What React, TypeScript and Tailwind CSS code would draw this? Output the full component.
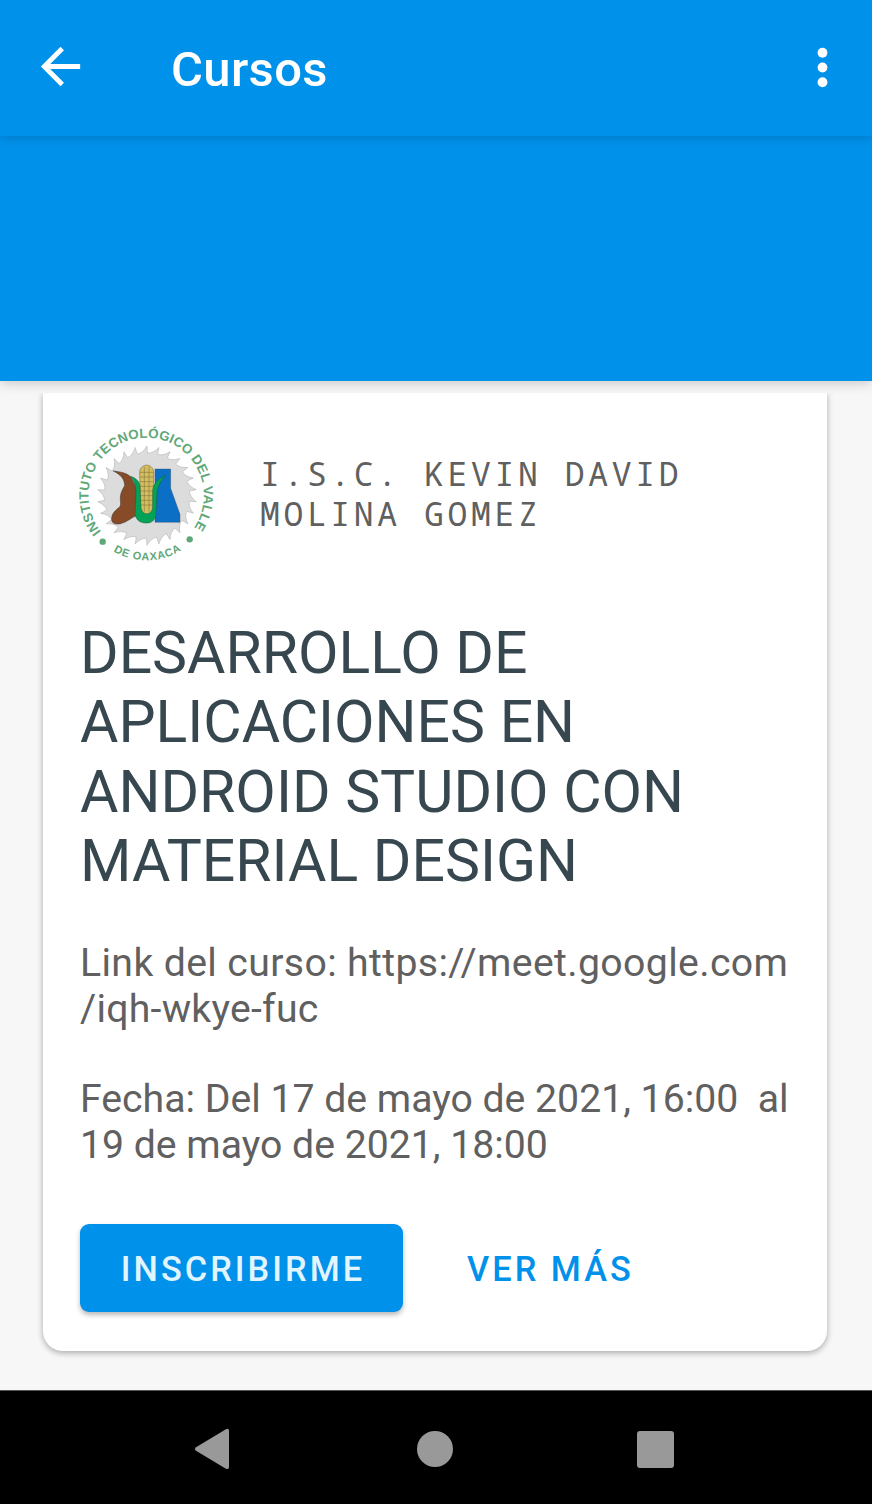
const GEAR_TEETH = 26;

function gearPath(cx: number, cy: number, outer: number, inner: number): string {
  const step = (Math.PI * 2) / GEAR_TEETH;
  const at = (r: number, a: number) => `${(cx + r * Math.sin(a)).toFixed(1)} ${(cy - r * Math.cos(a)).toFixed(1)}`;
  const parts: string[] = [`M${at(outer, 0)}`];
  for (let i = 0; i < GEAR_TEETH; i++) {
    const a = i * step;
    parts.push(`L${at(inner, a + step * 0.05)}Q${at(inner, a + step * 0.6)} ${at(outer, a + step)}`);
  }
  return parts.join("") + "Z";
}

function Emblem() {
  return (
    <svg viewBox="0 0 465 465" className="-mb-[10px] -ml-[10px] -mt-[10px] size-[155px] shrink-0 overflow-visible" role="img" aria-label="Instituto Tecnológico del Valle de Oaxaca">
      <defs>
        <path id="ring-top" d="M94 350A173 173 0 1 1 372 338" />
        <path id="ring-bottom" d="M130 409A198 198 0 0 0 342 401" />
      </defs>
      <path d={gearPath(231, 242, 149, 128)} fill="#dcdcdc" stroke="#aaa" strokeWidth="1.5" />
      <path d="M255 162H302V220L330 298V322H255Z" fill="#0b70c5" stroke="#345" strokeWidth="1" />
      <path
        d="M130 168C150 170 172 174 183 187L200 222L201 301C184 308 172 321 152 326C138 329 126 326 125 314C124 296 136 286 148 277C155 269 150 260 151 246C152 231 160 219 164 212C164 192 152 179 130 168Z"
        fill="#874b27"
        stroke="#333"
        strokeWidth="1.5"
      />
      <path d="M209 170C212 144 248 144 251 170V280C249 304 211 304 211 280Z" fill="#d3bd62" stroke="#665c24" strokeWidth="1.5" />
      <path
        d="M210 172H250M210 186H250M210 200H250M210 214H250M210 228H250M210 242H250M210 256H250M211 270H249M223 156V290M237 156V290"
        stroke="#76692e"
        strokeWidth="1.5"
        fill="none"
      />
      <path
        d="M182 184C196 189 209 199 210 214L213 276C214 303 247 303 248 276V226C250 206 265 190 288 181C274 196 263 212 261 232L258 294C256 318 244 325 226 324C206 323 196 311 195 294L198 240C199 216 194 199 182 184Z"
        fill="#02a357"
        stroke="#195d39"
        strokeWidth="1.5"
      />
      <g fill="#5fa878" fontFamily="'Liberation Sans', Arial, sans-serif" fontWeight="700">
        <text fontSize="40">
          <textPath href="#ring-top" textLength="764" lengthAdjust="spacing">
            INSTITUTO TECNOLÓGICO DEL VALLE
          </textPath>
        </text>
        <text fontSize="33">
          <textPath href="#ring-bottom" textLength="214" lengthAdjust="spacing">
            DE OAXACA
          </textPath>
        </text>
        <circle cx="98" cy="380" r="9.5" />
        <circle cx="359" cy="373" r="9.5" />
      </g>
    </svg>
  );
}

function TopBar() {
  return (
    <header className="relative z-10 flex h-[136px] shrink-0 items-center bg-[#0091ea] pl-[31px] pr-[20px] text-white shadow-[0_2px_10px_rgba(0,0,0,0.16)]">
      <button aria-label="Volver" className="-mt-[4px]">
        <svg viewBox="0 0 24 24" className="size-[59px]" fill="currentColor">
          <path d="M20 11H7.83l5.59-5.59L12 4l-8 8 8 8 1.41-1.41L7.83 13H20v-2z" />
        </svg>
      </button>
      <h1 className="ml-[81px] mt-[3px] text-[49px] font-medium leading-[58px] tracking-[0.35px]">Cursos</h1>
      <button aria-label="Más opciones" className="-mt-[2px] ml-auto">
        <svg viewBox="0 0 24 24" className="size-[59px]" fill="currentColor">
          <circle cx="12" cy="6" r="2" />
          <circle cx="12" cy="12" r="2" />
          <circle cx="12" cy="18" r="2" />
        </svg>
      </button>
    </header>
  );
}

function CourseCard() {
  return (
    <article className="h-[958px] rounded-b-[20px] bg-white pl-[37px] pt-[32px] shadow-[0_2px_6px_rgba(0,0,0,0.32)]">
      <div className="flex items-start">
        <Emblem />
        <p className="ml-[35px] mt-[29px] whitespace-pre font-['Noto_Sans_Mono','DejaVu_Sans_Mono',monospace] text-[33px] leading-[40px] tracking-[3.65px] text-[#606060]">
          {"I.S.C. KEVIN DAVID\nMOLINA GOMEZ"}
        </p>
      </div>
      <h2 className="mt-[58px] whitespace-pre text-[58.9px] leading-[69.4px] text-[#37474f]">
        {"DESARROLLO DE\nAPLICACIONES EN\nANDROID STUDIO CON\nMATERIAL DESIGN"}
      </h2>
      <p className="mt-[44px] whitespace-pre text-[39.2px] leading-[46px] tracking-[0.37px] text-[#606060]">
        {"Link del curso: https://meet.google.com\n"}
        <span className="tracking-[0.25px]">/iqh-wkye-fuc</span>
      </p>
      <p className="mt-[44px] whitespace-pre text-[39.2px] leading-[46px] text-[#606060]">
        {"Fecha: Del 17 de mayo de 2021, 16:00  al\n19 de mayo de 2021, 18:00"}
      </p>
      <div className="mt-[56px] flex items-center">
        <button className="flex h-[88px] w-[323px] items-center justify-center rounded-[9px] bg-[#0091ea] pl-[3px] pt-[5px] text-[34.3px] font-medium tracking-[3.06px] text-[#e1f5fe] shadow-[0_3px_5px_rgba(0,0,0,0.28)]">
          INSCRIBIRME
        </button>
        <button className="ml-[64px] pt-[5px] text-[34.3px] font-medium tracking-[3.06px] text-[#0091ea]">
          VER MÁS
        </button>
      </div>
    </article>
  );
}

function NavBar() {
  return (
    <nav className="flex h-[114px] shrink-0 items-center border-t border-[#555] bg-black pl-[194px] pt-[3px] text-[#999]">
      <svg viewBox="0 0 35 42" className="h-[42px] w-[36px]" fill="currentColor">
        <path d="M31 1.5Q34.5-.5 34.5 3V39Q34.5 42 31 40.5L1.5 22.8Q-.5 21 1.5 19.2Z" />
      </svg>
      <div className="ml-[187px] size-[36px] rounded-full bg-[#999]" />
      <div className="ml-[184px] size-[37px] rounded-[3px] bg-[#999]" />
    </nav>
  );
}

export default function App() {
  return (
    <div className="flex h-[1504px] w-[872px] flex-col overflow-hidden bg-[#f7f7f7] font-['Roboto',sans-serif]">
      <TopBar />
      <div className="relative h-[245px] shrink-0 bg-[#0091ea] shadow-[0_2px_12px_rgba(0,0,0,0.2)]" />
      <main className="mt-[12px] h-[997px] shrink-0 overflow-hidden pl-[43px] pr-[45px]">
        <CourseCard />
      </main>
      <NavBar />
    </div>
  );
}
